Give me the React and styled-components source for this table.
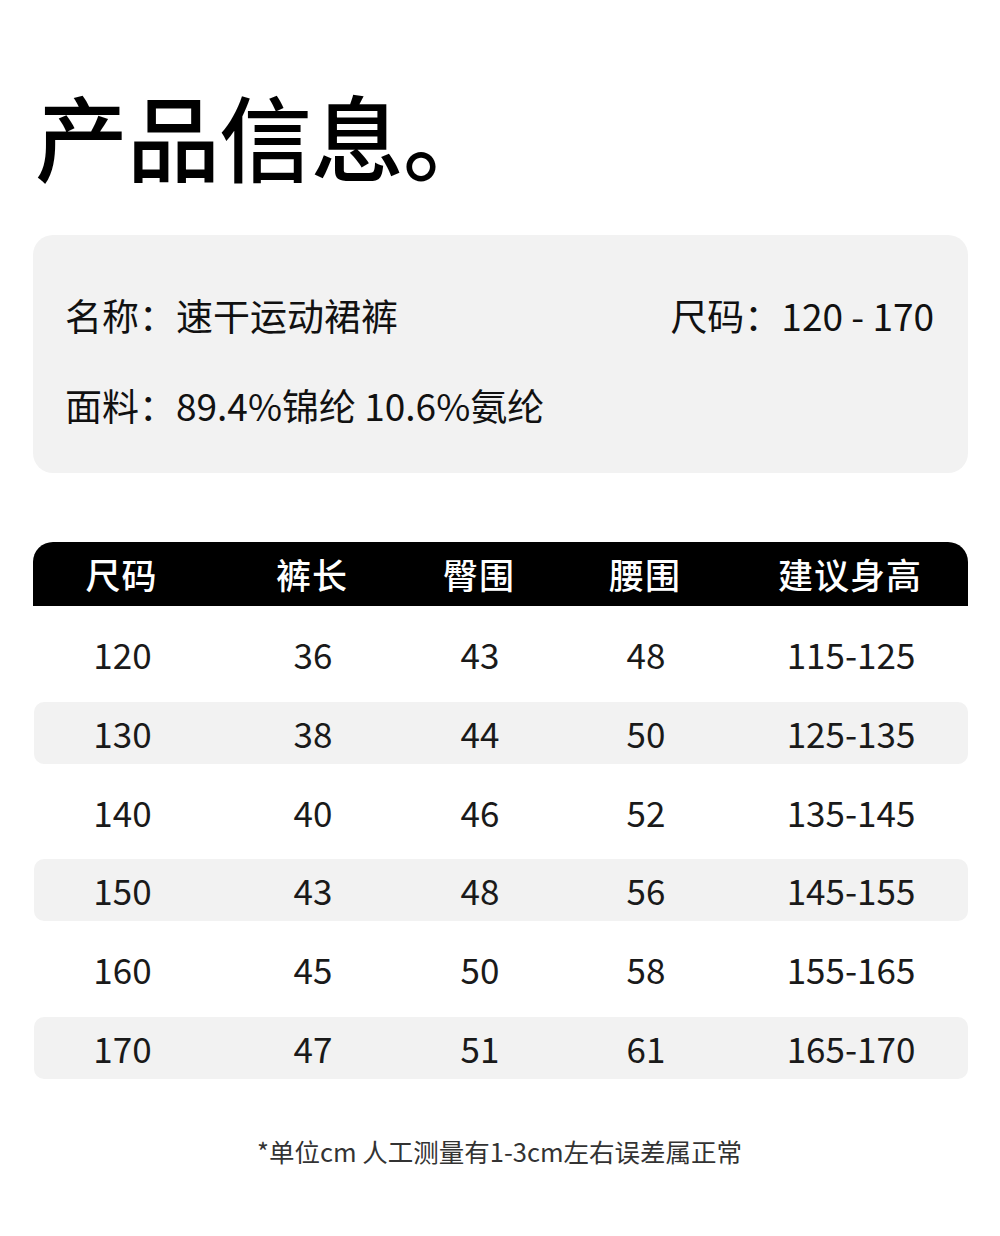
import React from 'react';
import styled, { createGlobalStyle } from 'styled-components';

const GlobalStyle = createGlobalStyle`
    html, body {
        margin: 0;
        padding: 0;
        background: #ffffff;
    }
    body {
        font-family: "Noto Sans CJK SC", "Noto Sans", sans-serif;
        color: #111111;
    }
`;

const columns = ['尺码', '裤长', '臀围', '腰围', '建议身高'];

const rows = [
    ['120', '36', '43', '48', '115-125'],
    ['130', '38', '44', '50', '125-135'],
    ['140', '40', '46', '52', '135-145'],
    ['150', '43', '48', '56', '145-155'],
    ['160', '45', '50', '58', '155-165'],
    ['170', '47', '51', '61', '165-170'],
];

const App = () => {
    return (
        <Page>
            <GlobalStyle />
            <Title>产品信息。</Title>
            <InfoCard>
                <InfoRow>
                    <InfoText>名称：速干运动裙裤</InfoText>
                    <InfoText>尺码：120 - 170</InfoText>
                </InfoRow>
                <InfoRow>
                    <InfoText>面料：89.4%锦纶 10.6%氨纶</InfoText>
                </InfoRow>
            </InfoCard>
            <SizeTable>
                <HeaderRow>
                    {columns.map((col) => (
                        <HeadCell key={col}>{col}</HeadCell>
                    ))}
                </HeaderRow>
                <Body>
                    {rows.map((row, idx) => (
                        <DataRow key={row[0]} $striped={idx % 2 === 1}>
                            {row.map((val, i) => (
                                <Cell key={i}>{val}</Cell>
                            ))}
                        </DataRow>
                    ))}
                </Body>
            </SizeTable>
            <Note>*单位cm 人工测量有1-3cm左右误差属正常</Note>
        </Page>
    );
};

const Page = styled.div`
    width: 1000px;
    height: 1236px;
    box-sizing: border-box;
    padding: 88px 32px 0 33px;
    background: #ffffff;
    overflow: hidden;
`;

const Title = styled.h1`
    margin: 0 0 53px 2px;
    font-size: 93px;
    line-height: 94px;
    font-weight: 500;
    color: #000000;
    letter-spacing: -1px;
`;

const InfoCard = styled.div`
    display: flex;
    flex-direction: column;
    gap: 54px;
    height: 238px;
    box-sizing: border-box;
    padding: 62px 34px 0 32px;
    background-color: #f2f2f2;
    border-radius: 20px;
`;

const InfoRow = styled.div`
    display: flex;
    justify-content: space-between;
    align-items: center;
`;

const InfoText = styled.span`
    font-size: 37px;
    line-height: 36px;
    font-weight: 400;
    color: #111111;
`;

const SizeTable = styled.div`
    margin-top: 69px;
    width: 935px;
`;

const grid = `
    display: grid;
    grid-template-columns: 177px 204px 130px 202px 208px;
    align-items: center;
`;

const HeaderRow = styled.div`
    ${grid}
    height: 64px;
    background-color: #000000;
    border-radius: 20px 20px 0 0;
`;

const HeadCell = styled.div`
    text-align: center;
    font-size: 35px;
    line-height: 64px;
    font-weight: 500;
    color: #ffffff;
    letter-spacing: 1px;
`;

const Body = styled.div`
    display: flex;
    flex-direction: column;
    gap: 16.75px;
    padding-top: 17px;
`;

const DataRow = styled.div`
    ${grid}
    height: 62px;
    margin-left: 1px;
    background-color: ${(p) => (p.$striped ? '#f2f2f2' : 'transparent')};
    border-radius: 10px;
`;

const Cell = styled.div`
    text-align: center;
    font-size: 35px;
    line-height: 58px;
    font-weight: 400;
    color: #1a1a1a;
`;

const Note = styled.div`
    margin-top: 59px;
    margin-right: 2px;
    text-align: center;
    font-size: 25.5px;
    line-height: 26px;
    color: #333333;
`;

export default App;
